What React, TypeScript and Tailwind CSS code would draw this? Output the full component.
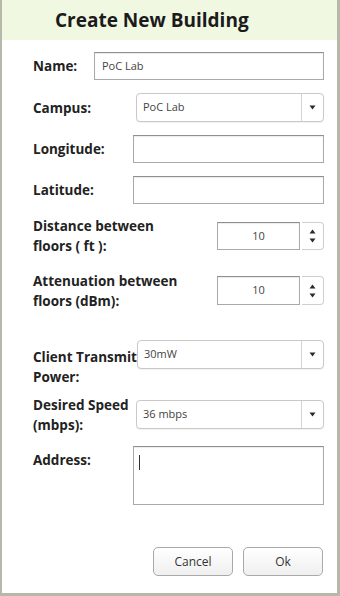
import React from 'react';

const font = { fontFamily: '"Open Sans", "DejaVu Sans", sans-serif' };

function Caret({ up }: { up?: boolean }) {
  return (
    <svg width="7" height="5" viewBox="0 0 7 5" className="block">
      {up ? <path d="M3.5 0.5 L6.5 4.5 L0.5 4.5 Z" fill="#2a2a2a" /> : <path d="M0.5 0.5 L6.5 0.5 L3.5 4.5 Z" fill="#2a2a2a" />}
    </svg>
  );
}

function TextBox({ value, className }: { value?: string; className: string }) {
  return (
    <div
      className={`h-full border border-[#a9a9a9] border-t-[#8f8f8f] bg-white shadow-[inset_0_1px_1px_rgba(0,0,0,0.08)] flex items-center px-[7px] text-[11px] text-[#444] ${className}`}
    >
      {value}
    </div>
  );
}

function Select({ value }: { value: string }) {
  return (
    <div className="ml-auto w-[188px] h-full flex rounded-[4px] border border-[#c9c9c9] bg-white shadow-[0_1px_1px_rgba(0,0,0,0.06)]">
      <div className="flex-1 flex items-center px-[6px] text-[11px] text-[#444]">{value}</div>
      <div className="w-[22px] border-l border-[#d4d4d4] flex items-center justify-center">
        <Caret />
      </div>
    </div>
  );
}

function Spinner({ value }: { value: string }) {
  return (
    <div className="ml-auto h-full flex">
      <div className="w-[83px] h-full border border-[#a9a9a9] border-t-[#8f8f8f] bg-white shadow-[inset_0_1px_1px_rgba(0,0,0,0.08)] flex items-center justify-center text-[11px] text-[#444]">
        {value}
      </div>
      <div className="w-[22px] ml-[2px] h-full rounded-r-[4px] border border-l-0 border-[#cfcfcf] flex flex-col items-center justify-center gap-[4px]">
        <Caret up />
        <Caret />
      </div>
    </div>
  );
}

function Label({ children, className = '' }: { children: React.ReactNode; className?: string }) {
  return <div className={`shrink-0 text-[13.5px] font-bold leading-[20px] text-[#222] ${className}`}>{children}</div>;
}

export default function App() {
  return (
    <div style={font} className="w-[340px] h-[596px] bg-white border-l-2 border-r-[3px] border-b-[3px] border-[#b7b7aa] flex flex-col">
      <div className="h-[40px] shrink-0 bg-[#f0f8e2] flex items-center pl-[53px]">
        <span className="text-[19px] font-bold text-[#1b1b1b]">Create New Building</span>
      </div>

      <div className="flex flex-col pl-[31px] pr-[13px]">
        <div className="mt-[12px] h-[28px] flex items-center">
          <Label>Name:</Label>
          <TextBox value="PoC Lab" className="ml-auto w-[230px]" />
        </div>

        <div className="mt-[13px] h-[29px] flex items-center">
          <Label>Campus:</Label>
          <Select value="PoC Lab" />
        </div>

        <div className="mt-[13px] h-[28px] flex items-center">
          <Label>Longitude:</Label>
          <TextBox className="ml-auto w-[191px]" />
        </div>

        <div className="mt-[13px] h-[28px] flex items-center">
          <Label>Latitude:</Label>
          <TextBox className="ml-auto w-[191px]" />
        </div>

        <div className="mt-[18px] h-[28px] flex items-center">
          <Label>
            Distance between
            <br />
            floors ( ft ):
          </Label>
          <Spinner value="10" />
        </div>

        <div className="mt-[26px] h-[29px] flex items-center">
          <Label>
            Attenuation between
            <br />
            floors (dBm):
          </Label>
          <Spinner value="10" />
        </div>

        <div className="mt-[35px] h-[29px] flex items-center">
          <Label className="mt-[24px]">
            Client Transmit
            <br />
            Power:
          </Label>
          <Select value="30mW" />
        </div>

        <div className="mt-[31px] h-[29px] flex items-center">
          <Label>
            Desired Speed
            <br />
            (mbps):
          </Label>
          <Select value="36 mbps" />
        </div>

        <div className="mt-[17px] h-[59px] flex items-start">
          <Label className="mt-[4px]">Address:</Label>
          <div className="ml-auto w-[191px] h-full border border-[#a9a9a9] border-t-[#8f8f8f] bg-white shadow-[inset_0_1px_1px_rgba(0,0,0,0.08)] pl-[5px] pt-[8px]">
            <div className="w-px h-[15px] bg-[#333]" />
          </div>
        </div>

        <div className="mt-[42px] h-[29px] flex justify-end gap-[10px] pr-[1px]">
          <button className="w-[80px] h-full rounded-[5px] border border-[#a9a9a9] bg-gradient-to-b from-white to-[#efefef] text-[12px] text-[#333]">
            Cancel
          </button>
          <button className="w-[80px] h-full rounded-[5px] border border-[#a9a9a9] bg-gradient-to-b from-white to-[#efefef] text-[12px] text-[#333]">
            Ok
          </button>
        </div>
      </div>
    </div>
  );
}
